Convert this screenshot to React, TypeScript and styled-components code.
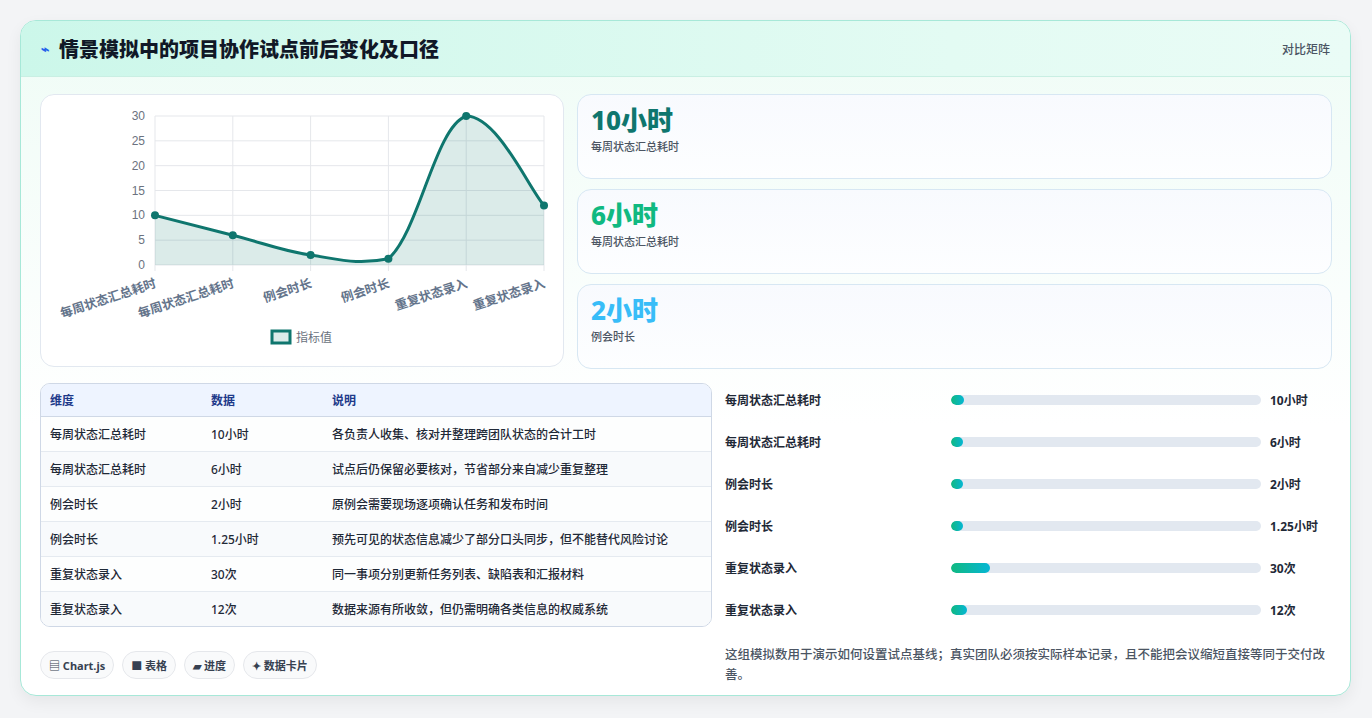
import React from 'react';
import styled, { createGlobalStyle } from 'styled-components';

const GlobalStyle = createGlobalStyle`
  html, body { margin: 0; padding: 0; background: #f3f4f6; }
  body { font-family: "Noto Sans", "Noto Sans CJK SC", sans-serif; color: #1f2937; }
`;

const ROWS = [
  { name: '每周状态汇总耗时', value: 10, text: '10小时', note: '各负责人收集、核对并整理跨团队状态的合计工时' },
  { name: '每周状态汇总耗时', value: 6, text: '6小时', note: '试点后仍保留必要核对，节省部分来自减少重复整理' },
  { name: '例会时长', value: 2, text: '2小时', note: '原例会需要现场逐项确认任务和发布时间' },
  { name: '例会时长', value: 1.25, text: '1.25小时', note: '预先可见的状态信息减少了部分口头同步，但不能替代风险讨论' },
  { name: '重复状态录入', value: 30, text: '30次', note: '同一事项分别更新任务列表、缺陷表和汇报材料' },
  { name: '重复状态录入', value: 12, text: '12次', note: '数据来源有所收敛，但仍需明确各类信息的权威系统' },
];

const STATS = [
  { value: '10小时', label: '每周状态汇总耗时', color: '#0f766e' },
  { value: '6小时', label: '每周状态汇总耗时', color: '#10b981' },
  { value: '2小时', label: '例会时长', color: '#38bdf8' },
];

const CHIPS = ['▤ Chart.js', '■ 表格', '▰ 进度', '✦ 数据卡片'];

// chart geometry (card-local)
const PX0 = 115;
const PX1 = 504;
const PY0 = 22;
const PY1 = 171;
const pts = ROWS.map((r, i) => [PX0 + (i * (PX1 - PX0)) / 5, PY1 - (r.value * (PY1 - PY0)) / 30]);

const clampY = (y: number) => Math.min(PY1, Math.max(PY0, y));

const curve = () => {
  let d = `M${pts[0][0]},${pts[0][1]}`;
  for (let i = 0; i < pts.length - 1; i++) {
    const p0 = pts[i - 1] || pts[i];
    const p1 = pts[i];
    const p2 = pts[i + 1];
    const p3 = pts[i + 2] || p2;
    const t = 0.4 / 2;
    const c1 = [p1[0] + (p2[0] - p0[0]) * t, clampY(p1[1] + (p2[1] - p0[1]) * t)];
    const c2 = [p2[0] - (p3[0] - p1[0]) * t, clampY(p2[1] - (p3[1] - p1[1]) * t)];
    d += ` C${c1[0]},${c1[1]} ${c2[0]},${c2[1]} ${p2[0]},${p2[1]}`;
  }
  return d;
};

const LineChart = () => {
  const line = curve();
  return (
    <svg width="524" height="273" viewBox="0 0 524 273">
      {[0, 5, 10, 15, 20, 25, 30].map((v) => {
        const y = PY1 - (v * (PY1 - PY0)) / 30;
        return (
          <g key={v}>
            <line x1={PX0} x2={PX1} y1={y} y2={y} stroke="#e5e7eb" />
            <text x={PX0 - 10} y={y + 4} fontSize="12" fill="#6b7280" textAnchor="end" fontFamily="Liberation Sans, sans-serif">
              {v}
            </text>
          </g>
        );
      })}
      {pts.map(([x], i) => (
        <line key={i} x1={x} x2={x} y1={PY0} y2={PY1 + 6} stroke="#e5e7eb" />
      ))}
      <path d={`${line} L${PX1},${PY1} L${PX0},${PY1} Z`} fill="rgba(15,118,110,0.15)" />
      <path d={line} fill="none" stroke="#0f766e" strokeWidth="3" />
      {pts.map(([x, y], i) => (
        <circle key={i} cx={x} cy={y} r="4" fill="#0f766e" />
      ))}
      {pts.map(([x], i) => (
        <text
          key={i}
          x={x + 2}
          y={PY1 + 22}
          fontSize="12.5"
          fontWeight="600"
          fill="#64748b"
          textAnchor="end"
          transform={`rotate(-18 ${x + 2} ${PY1 + 22})`}
        >
          {ROWS[i].name}
        </text>
      ))}
      <rect x="232" y="237" width="18" height="12" fill="rgba(15,118,110,0.15)" stroke="#0f766e" strokeWidth="3" />
      <text x="256" y="248" fontSize="12" fill="#6b7280">指标值</text>
    </svg>
  );
};

const App = () => (
  <Page>
    <GlobalStyle />
    <Card>
      <Header>
        <Title>
          <Bolt>⌁</Bolt>情景模拟中的项目协作试点前后变化及口径
        </Title>
        <HeaderTag>对比矩阵</HeaderTag>
      </Header>
      <Body>
        <TopRow>
          <ChartBox>
            <LineChart />
          </ChartBox>
          <StatCol>
            {STATS.map((s, i) => (
              <StatCard key={i}>
                <StatValue color={s.color}>{s.value}</StatValue>
                <StatLabel>{s.label}</StatLabel>
              </StatCard>
            ))}
          </StatCol>
        </TopRow>
        <BottomRow>
          <LeftCol>
            <Table>
              <colgroup>
                <col style={{ width: 161 }} />
                <col style={{ width: 121 }} />
                <col />
              </colgroup>
              <thead>
                <tr>
                  <Th>维度</Th>
                  <Th>数据</Th>
                  <Th>说明</Th>
                </tr>
              </thead>
              <tbody>
                {ROWS.map((r, i) => (
                  <Tr key={i} odd={i % 2 === 1}>
                    <Td>{r.name}</Td>
                    <Td>{r.text}</Td>
                    <Td>{r.note}</Td>
                  </Tr>
                ))}
              </tbody>
            </Table>
            <Chips>
              {CHIPS.map((c) => (
                <Chip key={c}>{c}</Chip>
              ))}
            </Chips>
          </LeftCol>
          <RightCol>
            {ROWS.map((r, i) => (
              <ProgRow key={i}>
                <ProgLabel>{r.name}</ProgLabel>
                <Track>
                  <Fill style={{ width: `${Math.max(4, (r.value / 240) * 100)}%` }} />
                </Track>
                <ProgValue>{r.text}</ProgValue>
              </ProgRow>
            ))}
            <Note>这组模拟数用于演示如何设置试点基线；真实团队必须按实际样本记录，且不能把会议缩短直接等同于交付改善。</Note>
          </RightCol>
        </BottomRow>
      </Body>
    </Card>
  </Page>
);

const Page = styled.div`
  padding: 20px 20px 22px 20px;
  height: 718px;
  box-sizing: border-box;
`;

const Card = styled.div`
  width: 1331px;
  height: 676px;
  box-sizing: border-box;
  border: 1px solid #a7e8d8;
  border-radius: 16px;
  background: linear-gradient(180deg, #effcf6 0%, #ffffff 60%);
  overflow: hidden;
  box-shadow: 0 6px 16px rgba(0, 0, 0, 0.06);
`;

const Header = styled.div`
  height: 55px;
  display: flex;
  align-items: center;
  justify-content: space-between;
  padding: 0 20px;
  background: linear-gradient(90deg, #ccf7ea 0%, #e3fbf3 70%, #eafcf6 100%);
  border-bottom: 1px solid #c9efe3;
`;

const Title = styled.h1`
  margin: 0;
  font-size: 20px;
  font-weight: 800;
  color: #111827;
  display: flex;
  align-items: center;
`;

const Bolt = styled.span`
  color: #2563eb;
  font-size: 14px;
  margin-right: 10px;
`;

const HeaderTag = styled.span`
  font-size: 12px;
  color: #4b5563;
  font-weight: 500;
`;

const Body = styled.div`
  padding: 17px 18px 0 19px;
`;

const TopRow = styled.div`
  display: flex;
  gap: 13px;
`;

const ChartBox = styled.div`
  width: 524px;
  height: 273px;
  box-sizing: border-box;
  background: #fff;
  border: 1px solid #e2e8f0;
  border-radius: 14px;
  overflow: hidden;
  svg { display: block; margin: -1px; }
`;

const StatCol = styled.div`
  flex: 1;
  display: flex;
  flex-direction: column;
  gap: 10px;
`;

const StatCard = styled.div`
  height: 85px;
  box-sizing: border-box;
  border: 1px solid #d7e7f3;
  border-radius: 14px;
  background: linear-gradient(180deg, #f8fafe, #fdfeff);
  padding: 7px 13px;
`;

const StatValue = styled.div<{ color: string }>`
  font-size: 26px;
  font-weight: 800;
  line-height: 36px;
  color: ${(p) => p.color};
`;

const StatLabel = styled.div`
  font-size: 11px;
  font-weight: 500;
  color: #4b5563;
`;

const BottomRow = styled.div`
  display: flex;
  margin-top: 14px;
`;

const LeftCol = styled.div`
  width: 672px;
`;

const Table = styled.table`
  width: 100%;
  table-layout: fixed;
  border-collapse: separate;
  border-spacing: 0;
  border: 1px solid #cfd8e6;
  border-radius: 10px;
  overflow: hidden;
  font-size: 12px;
  font-weight: 500;
  color: #1f2937;
`;

const Th = styled.th`
  text-align: left;
  font-weight: 600;
  color: #1e3a8a;
  background: #eef4ff;
  height: 32px;
  padding: 0 9px;
  border-bottom: 1px solid #cfd8e6;
`;

const Tr = styled.tr<{ odd: boolean }>`
  background: ${(p) => (p.odd ? '#f8fafc' : '#fdfefe')};
`;

const Td = styled.td`
  height: 34px;
  padding: 0 9px;
  white-space: nowrap;
  border-bottom: 1px solid #e5eaf0;
  tr:last-child & { border-bottom: none; }
`;

const Chips = styled.div`
  display: flex;
  gap: 8px;
  margin-top: 24px;
`;

const Chip = styled.span`
  height: 28px;
  box-sizing: border-box;
  padding: 0 8px;
  display: inline-flex;
  align-items: center;
  border: 1px solid #e5e7eb;
  border-radius: 14px;
  background: #f9fafb;
  font-size: 11px;
  font-weight: 700;
  color: #374151;
`;

const RightCol = styled.div`
  flex: 1;
  padding: 0 0 0 13px;
  margin-top: -4px;
`;

const ProgRow = styled.div`
  display: flex;
  align-items: center;
  height: 42px;
`;

const ProgLabel = styled.div`
  width: 226px;
  font-size: 12px;
  font-weight: 600;
  color: #1f2937;
`;

const Track = styled.div`
  width: 310px;
  height: 10px;
  border-radius: 5px;
  background: #e2e8f0;
  overflow: hidden;
`;

const Fill = styled.div`
  height: 100%;
  border-radius: 5px;
  background: linear-gradient(90deg, #10b981, #06b6d4);
`;

const ProgValue = styled.div`
  margin-left: 9px;
  font-size: 12px;
  font-weight: 700;
  color: #1f2937;
`;

const Note = styled.p`
  margin: 14px 0 0;
  font-size: 12.5px;
  line-height: 20px;
  color: #4b5563;
  font-weight: 500;
  width: 600px;
`;

export default App;
